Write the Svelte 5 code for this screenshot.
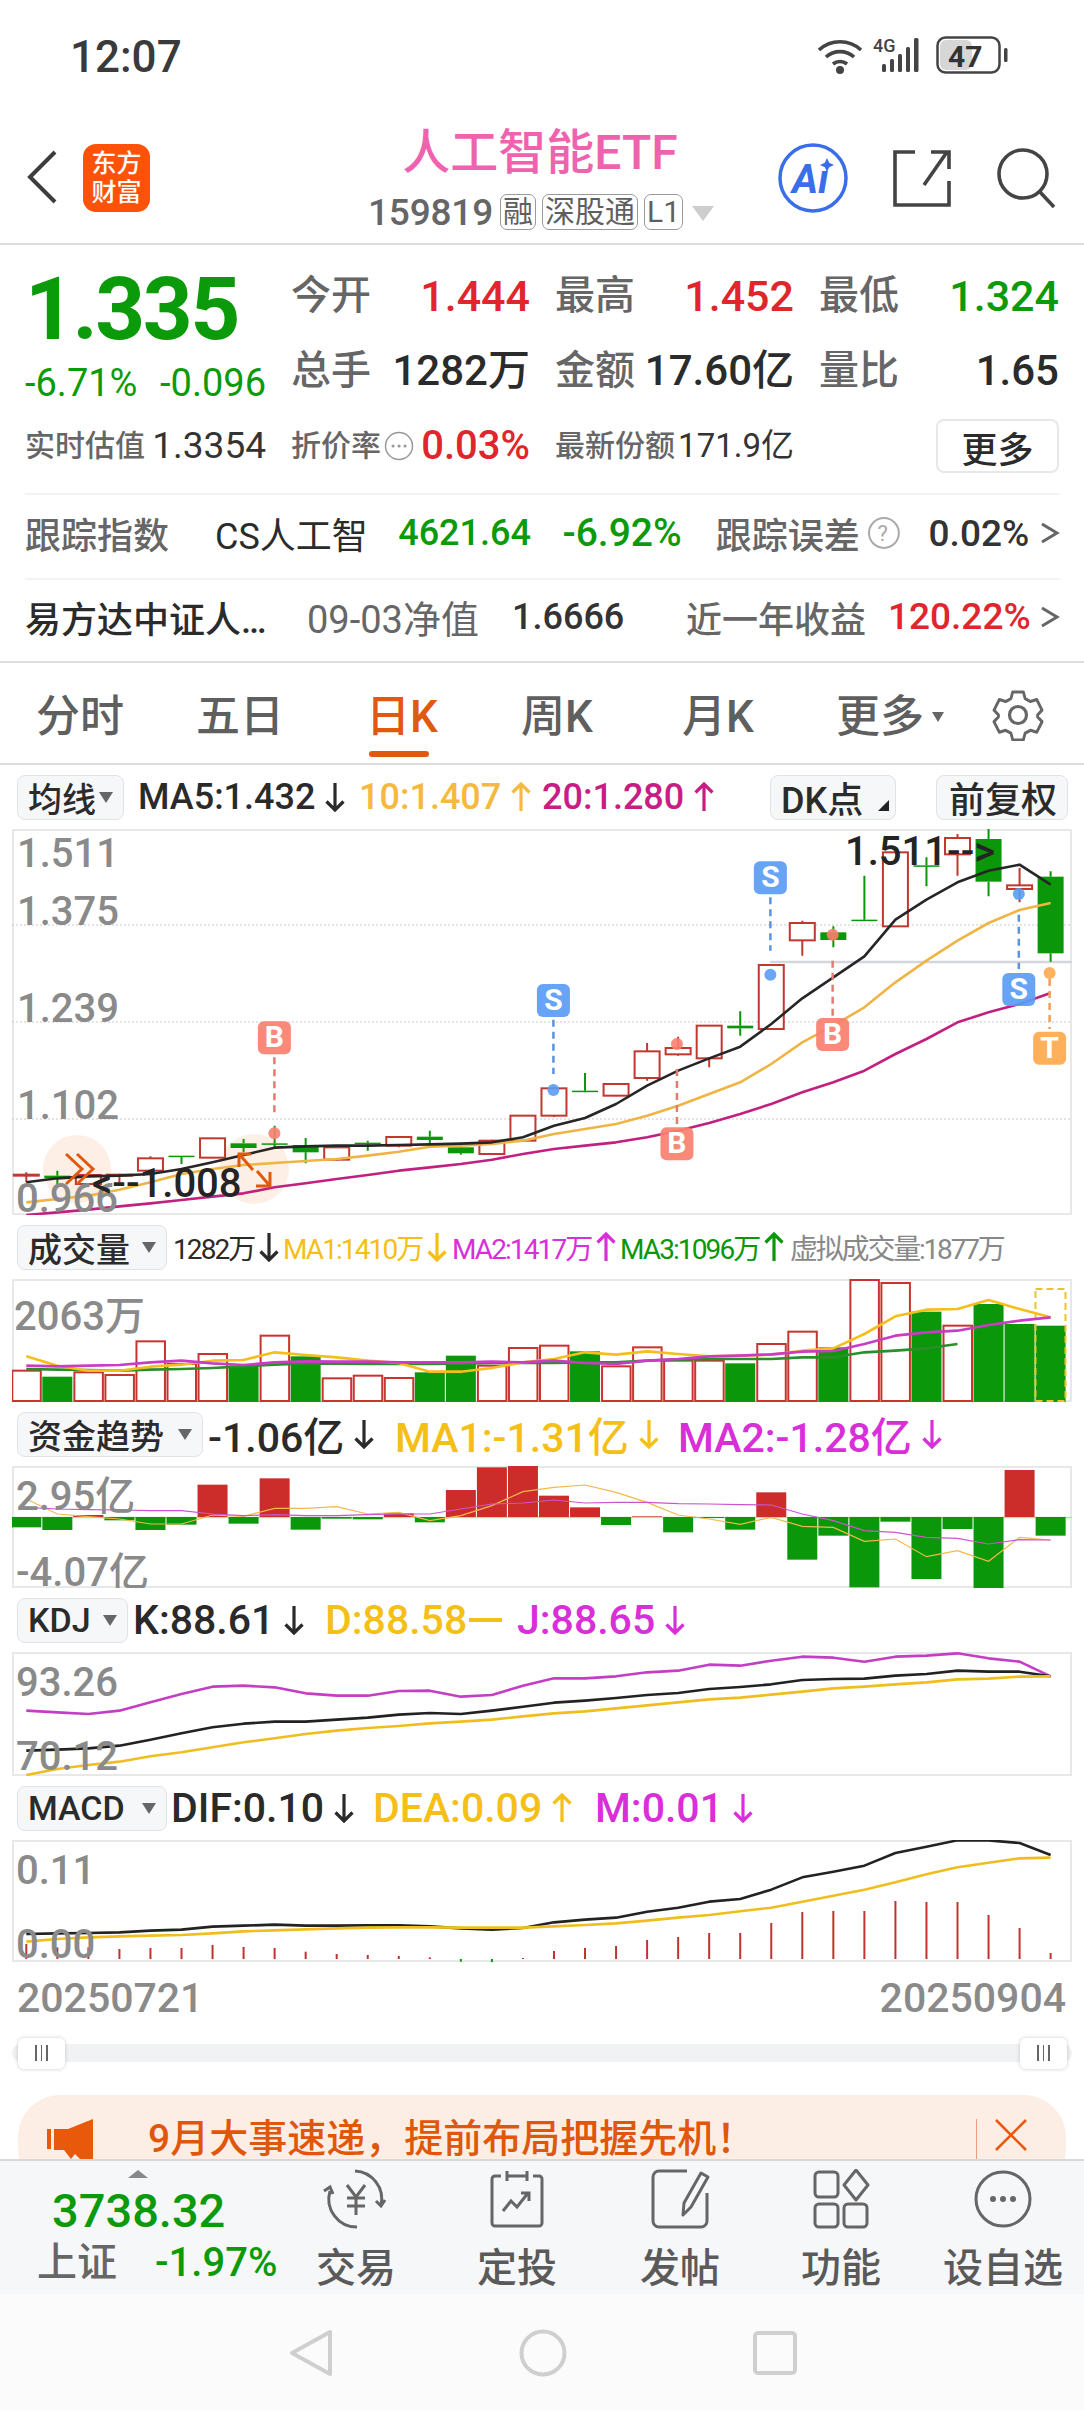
<script>
  const X = (i) => 26.3 + 31.04 * i;
  const pts = (arr, base, xs) => arr.map((v, i) => `${xs ? xs[i] : X(i)},${base + v / 3}`).join(' ');

  // [up, high, bodyTop, bodyBottom, low]
  const candles = [
    [1, 1210, 1217, 1220, 1240], [0, 1205, 1220, 1228, 1245], [1, 1214, 1218, 1245, 1247], [1, 1214, 1217, 1220, 1240],
    [1, 1162, 1168, 1205, 1208], [0, 1160, 1160, 1162, 1185], [1, 1106, 1108, 1166, 1168], [0, 1110, 1123, 1137, 1150],
    [0, 1070, 1123, 1125, 1140], [0, 1107, 1128, 1150, 1183], [1, 1133, 1135, 1172, 1175], [0, 1115, 1121, 1123, 1145],
    [1, 1102, 1104, 1130, 1135], [0, 1085, 1103, 1113, 1130], [0, 1125, 1135, 1153, 1157], [1, 1112, 1115, 1155, 1157],
    [1, 1038, 1040, 1115, 1118], [1, 955, 958, 1040, 1044], [0, 912, 965, 967, 970], [1, 943, 945, 980, 982],
    [1, 822, 847, 927, 935], [1, 803, 837, 856, 860], [1, 768, 770, 868, 895], [0, 727, 770, 778, 800],
    [1, 586, 588, 780, 782], [1, 455, 462, 514, 560], [0, 472, 490, 513, 535], [0, 320, 452, 454, 456],
    [1, 248, 250, 472, 474], [0, 265, 289, 291, 352], [1, 195, 207, 256, 320], [0, 180, 210, 338, 382],
    [1, 297, 349, 360, 400], [0, 307, 323, 553, 578],
  ];
  const ma5 = [1240, 1228, 1222, 1220, 1215, 1200, 1180, 1158, 1136, 1132, 1130, 1130, 1128, 1126, 1124, 1120, 1105, 1070, 1047, 1005, 950, 905, 868, 833, 765, 688, 625, 562, 452, 392, 340, 305, 287, 347];
  const ma10 = [1300, 1290, 1280, 1262, 1240, 1215, 1200, 1188, 1182, 1176, 1170, 1160, 1148, 1133, 1130, 1125, 1115, 1095, 1080, 1065, 1040, 1010, 975, 940, 885, 820, 770, 715, 640, 575, 515, 462, 423, 402];
  const ma20 = [1338, 1330, 1322, 1312, 1303, 1293, 1283, 1273, 1255, 1243, 1230, 1218, 1205, 1195, 1185, 1172, 1155, 1140, 1130, 1120, 1105, 1085, 1062, 1035, 1005, 970, 940, 905, 855, 810, 760, 730, 705, 672];
  const zx = (v) => 542 + v / 2.89;
  const zy = (v) => 770 + v / 3;
  const badges = [
    { t: 'B', x: 793 / 2.89, y1: 757, from: 865, to: 1035, dot: 1093, c: '#f8806f', l: '#e57a72' },
    { t: 'S', x: zx(33), y1: 645, from: 752, to: 915, dot: 963, c: '#5b9cf5', l: '#5b93dc' },
    { t: 'B', x: zx(390), y1: 1075, from: 900, to: 1065, dot: 825, c: '#f8806f', l: '#e57a72' },
    { t: 'S', x: zx(660), y1: 277, from: 385, to: 545, dot: 617, c: '#5b9cf5', l: '#5b93dc' },
    { t: 'B', x: zx(840), y1: 747, from: 575, to: 740, dot: 497, c: '#f8806f', l: '#e57a72' },
    { t: 'S', x: zx(1378), y1: 612, from: 437, to: 600, dot: 375, c: '#5b9cf5', l: '#5b93dc' },
    { t: 'T', x: zx(1467), y1: 788, from: 630, to: 780, dot: 612, c: '#ffa94d', l: '#f0a050' },
  ];

  const volumes = [455, 473, 460, 468, 367, 435, 405, 440, 350, 412, 478, 470, 477, 460, 410, 440, 387, 380, 397, 442, 385, 425, 425, 433, 375, 338, 385, 183, 192, 278, 320, 255, 315, 320];
  const volUp = [1, 0, 1, 1, 1, 1, 1, 0, 1, 0, 1, 1, 1, 0, 0, 1, 1, 1, 0, 1, 1, 1, 1, 0, 1, 1, 0, 1, 1, 0, 1, 0, 0, 0];
  const volMa1 = [412, 440, 455, 455, 443, 437, 425, 423, 400, 408, 415, 425, 432, 458, 458, 447, 430, 420, 400, 407, 397, 405, 412, 410, 407, 395, 388, 345, 292, 272, 270, 243, 270, 295];
  const volMa2 = [440, 442, 440, 438, 430, 425, 433, 438, 430, 427, 428, 428, 430, 430, 430, 428, 430, 425, 432, 435, 425, 420, 412, 410, 406, 398, 396, 375, 350, 340, 335, 318, 305, 295];
  const volMa3 = [450, 452, 453, 455, 452, 450, 447, 442, 437, 433, 434, 435, 435, 435, 434, 432, 432, 432, 430, 430, 425, 422, 420, 420, 420, 415, 415, 400, 395, 388, 375];

  const funds = [925, 933, 888, 904, 933, 917, 797, 914, 778, 932, 899, 901, 883, 910, 813, 745, 740, 830, 865, 918, 892, 940, 897, 932, 820, 1022, 950, 1105, 908, 1080, 930, 1108, 753, 950];
  const fundMa1 = [840, 885, 893, 900, 915, 915, 888, 892, 868, 868, 863, 885, 880, 905, 890, 860, 818, 805, 798, 820, 850, 888, 900, 916, 895, 922, 925, 967, 960, 1013, 995, 1027, 955, 963];
  const fundMa2 = [865, 870, 872, 873, 875, 875, 885, 890, 887, 890, 890, 887, 885, 885, 870, 855, 852, 843, 852, 850, 850, 854, 855, 857, 858, 885, 905, 935, 940, 955, 958, 975, 962, 963];

  const kdjJ = [275, 280, 285, 275, 250, 225, 203, 200, 205, 223, 230, 230, 216, 215, 233, 228, 200, 178, 178, 172, 160, 155, 137, 140, 125, 113, 116, 128, 113, 110, 103, 118, 128, 172];
  const kdjK = [395, 392, 388, 380, 362, 343, 325, 314, 308, 308, 302, 296, 287, 282, 285, 275, 263, 251, 245, 237, 228, 222, 210, 204, 196, 183, 180, 179, 170, 165, 155, 158, 158, 172];
  const kdjD = [468, 450, 438, 428, 412, 400, 385, 370, 358, 345, 335, 327, 321, 313, 308, 302, 292, 283, 277, 268, 259, 250, 241, 236, 227, 218, 208, 203, 196, 190, 181, 179, 173, 172];

  const dif = [945, 943, 942, 940, 935, 932, 923, 920, 917, 920, 920, 919, 919, 922, 928, 932, 927, 910, 902, 896, 878, 866, 848, 840, 812, 775, 758, 740, 702, 683, 664, 664, 672, 708];
  const dea = [968, 960, 955, 952, 950, 948, 943, 937, 934, 931, 928, 926, 925, 925, 926, 926, 926, 922, 918, 913, 905, 896, 888, 877, 866, 848, 830, 812, 790, 766, 745, 731, 718, 716];
  const macd = [975, 985, 985, 990, 987, 987, 978, 984, 987, 998, 1005, 1008, 1011, 1015, 1028, 1032, 1017, 996, 987, 981, 963, 954, 942, 942, 912, 879, 876, 876, 846, 849, 849, 888, 927, 1002];

  const tools = ['交易', '定投', '发帖', '功能', '设自选'];
  const tabs = ['分时', '五日', '日K', '周K', '月K'];
</script>

{#snippet arrow(dir)}
  <svg class="arrow" viewBox="0 0 22 30">
    {#if dir === 'down'}
      <path d="M11 1v27M2.5 19.5 11 28l8.5-8.5" />
    {:else}
      <path d="M11 29V2M2.5 10.5 11 2l8.5 8.5" />
    {/if}
  </svg>
{/snippet}

{#snippet caret()}
  <i class="caret"></i>
{/snippet}

<div class="page">
  <div class="status">
    <span class="time">12:07</span>
    <svg class="status-icons" viewBox="0 0 200 40" width="200" height="40">
      <g fill="none" stroke="#444" stroke-width="3.6">
        <path d="M1 14a31 31 0 0 1 42 0" />
        <path d="M8 21a21 21 0 0 1 28 0" />
        <path d="M15 28a11 11 0 0 1 14 0" />
      </g>
      <circle cx="22" cy="34" r="4" fill="#444" />
      <text x="55" y="16" class="four-g">4G</text>
      <g fill="#444">
        <rect x="64" y="28" width="4" height="8" rx="1.5" /><rect x="72" y="23" width="4" height="13" rx="1.5" />
        <rect x="80" y="18" width="4" height="18" rx="1.5" /><rect x="88" y="11" width="4" height="25" rx="1.5" />
        <rect x="96" y="2" width="4.5" height="34" rx="1.5" />
      </g>
      <rect x="119.5" y="1.5" width="62" height="35" rx="8" fill="#fff" stroke="#444" stroke-width="2.5" />
      <rect x="122" y="4" width="32" height="30" rx="6" fill="#d6d6d6" />
      <text x="130" y="31" class="batt">47</text>
      <rect x="186" y="12" width="3.5" height="14" rx="1.5" fill="#444" />
    </svg>
  </div>

  <header class="nav">
    <svg class="back" viewBox="0 0 32 56"><path d="M29 3 4 28l25 25" /></svg>
    <div class="logo"><span>东方</span><span>财富</span></div>
    <div class="title">
      <h1>人工智能ETF</h1>
      <div class="code">
        <span class="num">159819</span><b>融</b><b>深股通</b><b>L1</b><i class="down-tri"></i>
      </div>
    </div>
    <div class="nav-icons">
      <svg width="70" height="72" viewBox="0 0 70 72">
        <circle cx="35" cy="36" r="33" fill="none" stroke="#3a6ee8" stroke-width="3.5" />
        <text x="14" y="51" class="ai">Aı</text>
        <path d="M49 16l2.2 4.8 4.8 2.2-4.8 2.2-2.2 4.8-2.2-4.8-4.8-2.2 4.8-2.2z" fill="#3a6ee8" />
      </svg>
      <svg width="58" height="58" viewBox="0 0 58 58" fill="none" stroke="#444" stroke-width="3.6">
        <path d="M22 3H2v53h54V32M54 3 31 36M38 3h18v17" />
      </svg>
      <svg width="60" height="60" viewBox="0 0 60 60" fill="none" stroke="#444" stroke-width="3.6">
        <ellipse cx="27" cy="26" rx="24" ry="24" /><path d="M44 44l14 15" />
      </svg>
    </div>
  </header>

  <section class="quote">
    <div class="big">
      <div class="price">1.335</div>
      <div class="change"><span>-6.71%</span><span>-0.096</span></div>
    </div>
    <div class="kv"><label>今开</label><span class="red">1.444</span></div>
    <div class="kv"><label>最高</label><span class="red">1.452</span></div>
    <div class="kv"><label>最低</label><span class="green">1.324</span></div>
    <div class="kv"><label>总手</label><span class="ink">1282万</span></div>
    <div class="kv"><label>金额</label><span class="ink">17.60亿</span></div>
    <div class="kv"><label>量比</label><span class="ink">1.65</span></div>
    <div class="kv small"><label>实时估值</label><span class="dark">1.3354</span></div>
    <div class="kv small">
      <label>折价率</label>
      <svg class="dots" viewBox="0 0 30 30"><circle cx="15" cy="15" r="13.5" /><path d="M9 15h.1M15 15h.1M21 15h.1" /></svg>
      <span class="red rate">0.03%</span>
    </div>
    <div class="kv small"><label>最新份额</label><span class="dark share">171.9亿</span></div>
    <div class="more-cell"><button>更多</button></div>
  </section>

  <section class="row first">
    <label>跟踪指数</label>
    <span class="ink name">CS人工智</span>
    <span class="green v1">4621.64</span>
    <span class="green v2">-6.92%</span>
    <label class="v3">跟踪误差</label>
    <svg class="help" viewBox="0 0 34 34"><circle cx="17" cy="17" r="15" /><text x="10.5" y="25">?</text></svg>
    <span class="dark v4">0.02%</span>
    <svg class="gt" viewBox="0 0 20 24"><path d="M2 3l15 9L2 21" /></svg>
  </section>
  <section class="row second">
    <span class="ink fund">易方达中证人…</span>
    <label class="n1">09-03净值</label>
    <span class="dark n2">1.6666</span>
    <label class="n3">近一年收益</label>
    <span class="red n4">120.22%</span>
    <svg class="gt" viewBox="0 0 20 24"><path d="M2 3l15 9L2 21" /></svg>
  </section>

  <nav class="tabs">
    {#each tabs as t, i}
      <span class="tab" class:on={i === 2}>{t}</span>
    {/each}
    <span class="tab tab-more">更多<i class="mini-tri"></i></span>
    <svg class="gear" viewBox="0 0 54 52" fill="none" stroke="#666" stroke-width="3.2">
      <path d="M21 2h12l2 7 6 3 7-2 6 11-5 5 0 2 5 5-6 11-7-2-6 3-2 7H21l-2-7-6-3-7 2L0 33l5-5v-2l-5-5 6-11 7 2 6-3z" transform="translate(3 1) scale(.89 .96)" stroke-linejoin="round" />
      <circle cx="27" cy="26" r="8.5" />
    </svg>
  </nav>

  <div class="ind-head">
    <button class="sel" style="width:107px">均线{@render caret()}</button>
    <div class="vals v-ma">
      <span class="k">MA5:1.432{@render arrow('down')}</span>
      <span class="y2">10:1.407{@render arrow('up')}</span>
      <span class="p2">20:1.280{@render arrow('up')}</span>
    </div>
    <button class="sel dk">DK点<i class="corner"></i></button>
    <button class="sel fq">前复权</button>
  </div>
  <div class="frame">
    <svg viewBox="12 830 1060 386" width="1060" height="386">
      <g stroke="#c9c9c9" stroke-width="1" stroke-dasharray="2 2">
        <path d="M12 926H1072M12 1023H1072M12 1120H1072" />
      </g>
      <path d="M770 963H1072" stroke="#d4d6da" stroke-width="2.5" />

      <circle cx="77" cy="1170" r="34" fill="#fdeee6" />
      <circle cx="254" cy="1170" r="35" fill="#fdeee6" />

      {#each candles as [up, hi, top, bot, lo], i}
        {@const c = up ? '#c0382f' : '#0a970a'}
        <path d={`M${X(i)} ${zy(hi)}V${zy(top)}M${X(i)} ${zy(bot)}V${zy(lo)}`} stroke={c} stroke-width="2" />
        {#if up}
          <rect x={X(i) - 12.5} y={zy(top)} width="25" height={Math.max(zy(bot) - zy(top), 1)} fill="#fff" stroke={c} stroke-width="2" />
        {:else}
          <rect x={X(i) - 13} y={zy(top)} width="26" height={Math.max(zy(bot) - zy(top), 1.5)} fill={c} />
        {/if}
      {/each}

      <polyline class="line" points={pts(ma20, 770)} stroke="#c2207f" />
      <polyline class="line" points={pts(ma10, 770)} stroke="#f0b445" />
      <polyline class="line" points={pts(ma5, 770)} stroke="#262626" />

      <g class="axis">
        <text x="17" y="868">1.511</text>
        <text x="17" y="926">1.375</text>
        <text x="17" y="1023">1.239</text>
        <text x="17" y="1120">1.102</text>
        <text x="16" y="1213">0.966</text>
      </g>
      <text class="mark" x="845" y="866">1.511--&gt;</text>
      <text class="mark" x="92" y="1198">&lt;--1.008</text>

      <g fill="none" stroke="#e05a0e" stroke-width="3">
        <path d="M66 1155l16 15-16 15M77 1155l16 15-16 15" />
        <path d="M239 1168v-13h12M239 1155l14 16" />
        <path d="M256 1187h14v-14M270 1187l-13-15" />
      </g>

      {#each badges as b}
        <path d={`M${b.x} ${zy(b.from)}V${zy(b.to)}`} stroke={b.l} stroke-width="2.5" stroke-dasharray="7 5" />
        <circle cx={b.x} cy={zy(b.dot)} r="6" fill={b.c} opacity=".9" />
        <rect x={b.x - 16.5} y={zy(b.y1)} width="33" height="33" rx="6" fill={b.c} opacity=".92" />
        <text class="badge" x={b.x} y={zy(b.y1) + 26} text-anchor="middle">{b.t}</text>
      {/each}
    </svg>
  </div>

  <div class="ind-head">
    <button class="sel" style="width:150px">成交量{@render caret()}</button>
    <div class="vals v-vol">
      <span class="k">1282万{@render arrow('down')}</span>
      <span class="y">MA1:1410万{@render arrow('down')}</span>
      <span class="m">MA2:1417万{@render arrow('up')}</span>
      <span class="g">MA3:1096万{@render arrow('up')}</span>
      <span class="gray">虚拟成交量:1877万</span>
    </div>
  </div>
  <div class="frame">
    <svg viewBox="12 1280 1060 123" width="1060" height="123">
      <text class="axis" x="14" y="1331">2063万</text>
      {#each volumes as v, i}
        {@const y = 1220 + v / 3}
        {#if volUp[i]}
          <rect x={X(i) - 14} y={y} width="28.5" height={1402 - y} fill="#fff" stroke="#c8342f" stroke-width="2" />
        {:else}
          <rect x={X(i) - 15} y={y} width="30" height={1403 - y} fill="#0a970a" />
        {/if}
      {/each}
      <rect x="1035.5" y="1290" width="30" height="112" fill="none" stroke="#e9c52b" stroke-width="2" stroke-dasharray="7 4" />
      <polyline class="line" points={pts(volMa3, 1220)} stroke="#2a8f2a" />
      <polyline class="line" points={pts(volMa1, 1220)} stroke="#f5bf1b" />
      <polyline class="line" points={pts(volMa2, 1220)} stroke="#c93cc3" />
    </svg>
  </div>

  <div class="ind-head">
    <button class="sel" style="width:186px">资金趋势{@render caret()}</button>
    <div class="vals v-fund">
      <span class="k">-1.06亿{@render arrow('down')}</span>
      <span class="y">MA1:-1.31亿{@render arrow('down')}</span>
      <span class="m">MA2:-1.28亿{@render arrow('down')}</span>
    </div>
  </div>
  <div class="frame">
    <svg viewBox="12 1467 1060 122" width="1060" height="122">
      <path d="M12 1518.5H1072" stroke="#a6e6a6" stroke-width="1.5" />
      {#each funds as v, i}
        {@const y = 1220 + v / 3}
        {#if y < 1518}
          <rect x={X(i) - 15} y={y} width="30" height={1518 - y} fill="#cc2d2a" />
        {:else}
          <rect x={X(i) - 15} y="1518" width="30" height={y - 1518} fill="#0a970a" />
        {/if}
      {/each}
      <polyline class="thin" points={pts(fundMa1, 1220)} stroke="#f2b84a" />
      <polyline class="thin" points={pts(fundMa2, 1220)} stroke="#cc55cc" />
      <g class="axis">
        <text x="16" y="1511">2.95亿</text>
        <text x="16" y="1587">-4.07亿</text>
      </g>
    </svg>
  </div>

  <div class="ind-head">
    <button class="sel" style="width:111px">KDJ{@render caret()}</button>
    <div class="vals v-kdj">
      <span class="k">K:88.61{@render arrow('down')}</span>
      <span class="y">D:88.58<em class="flat"></em></span>
      <span class="m">J:88.65{@render arrow('down')}</span>
    </div>
  </div>
  <div class="frame">
    <svg viewBox="12 1653 1060 124" width="1060" height="124">
      <polyline class="line" points={pts(kdjJ, 1620)} stroke="#c33ec4" />
      <polyline class="line" points={pts(kdjK, 1620)} stroke="#222" />
      <polyline class="line" points={pts(kdjD, 1620)} stroke="#efbe1e" />
      <g class="axis">
        <text x="16" y="1697">93.26</text>
        <text x="16" y="1771">70.12</text>
      </g>
    </svg>
  </div>

  <div class="ind-head">
    <button class="sel" style="width:150px">MACD{@render caret()}</button>
    <div class="vals v-macd">
      <span class="k">DIF:0.10{@render arrow('down')}</span>
      <span class="y">DEA:0.09{@render arrow('up')}</span>
      <span class="m">M:0.01{@render arrow('down')}</span>
    </div>
  </div>
  <div class="frame">
    <svg viewBox="12 1841 1060 122" width="1060" height="122">
      {#each macd as v, i}
        {@const y = 1620 + v / 3}
        <path d={`M${X(i)} 1960V${y}`} stroke={v > 1020 ? '#0a970a' : '#c0332e'} stroke-width="2" />
      {/each}
      <polyline class="line" points={pts(dif, 1620)} stroke="#222" />
      <polyline class="line" points={pts(dea, 1620)} stroke="#efbe1e" />
      <g class="axis">
        <text x="16" y="1885">0.11</text>
        <text x="16" y="1959">0.00</text>
      </g>
    </svg>
  </div>

  <div class="dates"><span>20250721</span><span>20250904</span></div>

  <div class="slider">
    <span class="handle"><i></i><i></i><i></i></span>
    <span class="handle"><i></i><i></i><i></i></span>
  </div>

  <div class="banner">
    <svg width="46" height="40" viewBox="0 0 46 40" fill="#e8590c">
      <rect x="0" y="10" width="4" height="20" />
      <path d="M7 10h14L46 0v40H33l-5-5-4 5-7-9H7z" />
    </svg>
    <span class="banner-text">9月大事速递，提前布局把握先机！</span>
    <i class="banner-sep"></i>
    <svg width="34" height="32" viewBox="0 0 34 32" stroke="#e8590c" stroke-width="2.6" fill="none"><path d="M2 1l30 30M32 1 2 31" /></svg>
  </div>

  <footer class="tools">
    <div class="ticker">
      <i class="up-tri"></i>
      <div class="index">3738.32</div>
      <div class="index-row"><label>上证</label><span class="green">-1.97%</span></div>
    </div>
    {#each tools as t, i}
      <div class="tool">
        <svg width="70" height="60" viewBox="0 0 70 60" fill="none" stroke="#666" stroke-width="3">
          {#if i === 0}
            <path d="M34 2a28 28 0 0 1 26 34M36 58A28 28 0 0 1 9 22" />
            <path d="M3 22l6-4 3 7M55 32l5 5 4-6" />
            <path d="M26 16l9 12 9-12M35 28v18M26 29h18M26 37h18" />
          {:else if i === 1}
            <path d="M19 7h-6a3 3 0 0 0-3 3v44a3 3 0 0 0 3 3h44a3 3 0 0 0 3-3V10a3 3 0 0 0-3-3h-6M25 7h20M25 2v10M45 2v10" />
            <path d="M21 42l8-10 6 6 11-14M39 24h8v8" />
          {:else if i === 2}
            <path d="M42 2H14a6 6 0 0 0-6 6v44a6 6 0 0 0 6 6h42a6 6 0 0 0 6-6V24" />
            <path d="M56 4l7 4-17 30-8 8 1-12z" stroke-linejoin="round" />
          {:else if i === 3}
            <rect x="9" y="3" width="23" height="25" rx="4" /><rect x="9" y="35" width="23" height="23" rx="4" /><rect x="38" y="35" width="23" height="23" rx="4" />
            <path d="M50 1l12 15-12 15-12-15z" stroke-linejoin="round" />
          {:else}
            <circle cx="35" cy="30" r="27" />
            <g fill="#666" stroke="none"><circle cx="25" cy="30" r="3" /><circle cx="35" cy="30" r="3" /><circle cx="45" cy="30" r="3" /></g>
          {/if}
        </svg>
        <span>{t}</span>
      </div>
    {/each}
  </footer>

  <div class="sysnav">
    <svg width="44" height="48" viewBox="0 0 44 48" fill="none" stroke="#cfcfcf" stroke-width="4" stroke-linejoin="round"><path d="M41 3v42L3 24z" /></svg>
    <svg width="48" height="48" viewBox="0 0 48 48" fill="none" stroke="#cfcfcf" stroke-width="4"><circle cx="24" cy="24" r="21.5" /></svg>
    <svg width="44" height="44" viewBox="0 0 44 44" fill="none" stroke="#cfcfcf" stroke-width="4"><rect x="2" y="2" width="40" height="40" rx="3" /></svg>
  </div>
</div>

<style>
  :global(body) {
    margin: 0;
    background: #fff;
  }

  .page {
    width: 1084px;
    height: 2412px;
    overflow: hidden;
    position: relative;
    font-family: Roboto, "Noto Sans CJK SC", sans-serif;
    color: #333;
  }

  .red { color: #e0262c; }
  .green { color: #0a9a0a; }
  .ink { color: #2b2b2b; font-weight: 500; }
  .dark { color: #333; }
  label { color: #666; font-weight: 500; }

  .status {
    height: 120px;
    display: flex;
    justify-content: space-between;
    align-items: flex-start;
    padding: 33px 66px 0 70px;
    box-sizing: border-box;
  }

  .time {
    font-size: 44px;
    font-weight: 500;
    color: #3a3a3a;
    line-height: 48px;
  }

  .status-icons {
    margin-top: 3px;
    margin-right: 0;
  }

  .four-g { font: 500 18px Roboto, sans-serif; fill: #444; }
  .batt { font: 700 30px Roboto, sans-serif; fill: #333; }

  .nav {
    height: 125px;
    box-sizing: border-box;
    border-bottom: 2px solid #dddddd;
    display: flex;
    align-items: flex-start;
    position: relative;
    padding: 24px 0 0 26px;
  }

  .back {
    width: 32px;
    height: 56px;
    margin-top: 5px;
    fill: none;
    stroke: #3d3d3d;
    stroke-width: 4;
  }

  .logo {
    width: 67px;
    height: 68px;
    margin-left: 25px;
    border-radius: 13px;
    background: #ff5209;
    color: #fff;
    font-size: 25px;
    line-height: 29px;
    font-weight: 500;
    display: flex;
    flex-direction: column;
    align-items: center;
    justify-content: center;
  }

  .title {
    position: absolute;
    left: 280px;
    width: 520px;
    top: 0;
    display: flex;
    flex-direction: column;
    align-items: center;
  }

  h1 {
    margin: 0;
    font-size: 48px;
    line-height: 66px;
    font-weight: 500;
    color: #ef63ae;
    margin-top: 0;
  }

  .code {
    display: flex;
    align-items: center;
    gap: 6px;
    height: 38px;
    margin-top: 7px;
    color: #666;
    margin-left: 2px;
  }

  .num {
    font-size: 37px;
    font-weight: 500;
    margin-right: 1px;
    letter-spacing: -.2px;
  }

  .code b {
    font-weight: 400;
    font-size: 30px;
    line-height: 34px;
    padding: 0 2px;
    border: 1.5px solid #9a9a9a;
    border-radius: 7px;
    color: #5f5f5f;
  }

  .down-tri {
    width: 0;
    height: 0;
    border: 11px solid transparent;
    border-top: 15px solid #cdcdcd;
    border-bottom: 0;
    margin-left: 3px;
    margin-top: 2px;
  }

  .nav-icons {
    position: absolute;
    left: 778px;
    top: 22px;
    display: flex;
    align-items: center;
    gap: 45px;
  }

  .ai {
    font: italic 700 40px Roboto, sans-serif;
    fill: #3a6ee8;
  }

  .quote {
    height: 250px;
    box-sizing: border-box;
    margin: 0 24px 0 25px;
    padding-top: 13px;
    border-bottom: 2px solid #f3f3f3;
    display: grid;
    grid-template-columns: 241px 239px 239px 240px;
    grid-template-rows: 75px 75px 75px;
    column-gap: 25px;
    align-items: center;
  }

  .big {
    grid-row: 1 / span 2;
    align-self: start;
  }

  .price {
    font-size: 87px;
    line-height: 96px;
    font-weight: 700;
    color: #0a9a0a;
    margin-top: 3px;
    letter-spacing: -2.4px;
  }

  .change {
    display: flex;
    justify-content: space-between;
    font-size: 38px;
    color: #0a9a0a;
    line-height: 40px;
    margin-top: 6px;
    white-space: nowrap;
  }

  .kv {
    display: flex;
    align-items: center;
    justify-content: space-between;
    font-size: 43px;
    line-height: 46px;
    font-weight: 500;
    white-space: nowrap;
  }

  .kv label {
    font-size: 40px;
  }

  .kv .ink {
    font-size: 42px;
  }

  .kv.small {
    font-size: 37px;
    font-weight: 400;
    justify-content: flex-start;
    gap: 0;
  }

  .kv.small label {
    font-size: 30px;
    flex: 0 0 auto;
  }

  .kv.small > :last-child {
    margin-left: auto;
  }

  .kv .rate {
    font-size: 40px;
    font-weight: 500;
  }

  .kv .share {
    font-size: 33px;
  }

  .dots {
    width: 30px;
    height: 30px;
    margin-left: 3px;
    fill: none;
    stroke: #999;
    stroke-width: 1.5;
  }

  .dots path {
    stroke-width: 3;
    stroke-linecap: round;
  }

  .more-cell {
    justify-self: end;
  }

  button {
    font-family: inherit;
    color: #2b2b2b;
  }

  .more-cell button {
    width: 123px;
    height: 54px;
    background: #fff;
    border: 2px solid #e8e8e8;
    border-radius: 8px;
    font-size: 36px;
    padding: 0;
    font-weight: 500;
  }

  .row {
    box-sizing: border-box;
    margin: 0 24px 0 25px;
    display: flex;
    align-items: center;
    font-size: 36px;
    white-space: nowrap;
  }

  .row.first {
    height: 85px;
    padding-bottom: 7px;
    border-bottom: 2px solid #f3f3f3;
  }

  .row.second {
    height: 83px;
    margin: 0;
    padding: 0 24px 8px 25px;
    border-bottom: 2px solid #dddddd;
  }

  .name { margin-left: 46px; width: 184px; font-weight: 400; }
  .v1 { width: 165px; font-weight: 500; }
  .v2 { width: 154px; font-weight: 500; font-size: 39px; }
  .help {
    width: 34px;
    height: 34px;
    margin-left: 7px;
    fill: none;
    stroke: #aaa;
    stroke-width: 2;
  }

  .help text {
    font-size: 22px;
    fill: #aaa;
    stroke: none;
  }

  .v4 { margin-left: 28px; width: 112px; font-weight: 500; font-size: 37px; }
  .gt {
    width: 20px;
    height: 24px;
    fill: none;
    stroke: #666;
    stroke-width: 3;
    margin-left: auto;
  }

  .fund { width: 282px; }
  .n1 { width: 205px; font-size: 38px; font-weight: 400; }
  .n2 { width: 174px; font-weight: 500; }
  .n3 { width: 202px; }
  .n4 { font-weight: 500; font-size: 37px; }

  .tabs {
    height: 102px;
    box-sizing: border-box;
    border-bottom: 2px solid #dddddd;
    position: relative;
    display: flex;
    align-items: center;
    padding: 8px 0 0 36px;
    font-size: 44px;
    color: #5f5f5f;
  }

  .tab {
    font-weight: 500;
    line-height: 50px;
    position: relative;
  }

  .tab:nth-child(1) { width: 160px; }
  .tab:nth-child(2) { width: 170px; }
  .tab:nth-child(3) { width: 155px; }
  .tab:nth-child(4) { width: 161px; }
  .tab:nth-child(5) { width: 154px; }

  .tab.on {
    color: #e05a0e;
  }

  .tab.on::after {
    content: '';
    position: absolute;
    left: 3px;
    width: 60px;
    top: 59px;
    height: 6px;
    background: #e05a0e;
    border-radius: 3px;
  }

  .tab-more {
    display: flex;
    align-items: center;
  }

  .mini-tri {
    width: 0;
    height: 0;
    border: 6px solid transparent;
    border-top: 10px solid #666;
    border-bottom: 0;
    margin-left: 8px;
  }

  .gear {
    width: 54px;
    height: 52px;
    margin-left: 47px;
    margin-top: -4px;
  }

  .ind-head {
    height: 64px;
    display: flex;
    align-items: center;
    padding-left: 17px;
    white-space: nowrap;
  }

  .sel {
    height: 45px;
    box-sizing: border-box;
    background: #f6f7f9;
    border: 1.5px solid #e0e2e6;
    border-radius: 8px;
    font-size: 34px;
    font-weight: 500;
    padding: 0 0 0 10px;
    display: flex;
    align-items: center;
  }

  .caret {
    width: 0;
    height: 0;
    border: 7px solid transparent;
    border-top: 11px solid #666;
    border-bottom: 0;
    margin-left: auto;
    margin-right: 10px;
  }

  .dk {
    width: 126px;
    position: absolute;
    left: 770px;
    font-size: 36px;
  }

  .fq {
    width: 132px;
    position: absolute;
    left: 936px;
    font-size: 36px;
    padding: 0 0 0 12px;
  }

  .corner {
    position: absolute;
    right: 6px;
    bottom: 8px;
    width: 0;
    height: 0;
    border-left: 11px solid transparent;
    border-bottom: 11px solid #222;
  }

  .vals {
    display: flex;
    align-items: center;
    font-weight: 500;
    font-size: 41px;
  }

  .vals span {
    display: flex;
    align-items: center;
  }

  .arrow {
    width: 22px;
    height: 30px;
    flex: none;
    fill: none;
    stroke: currentColor;
    stroke-width: 3.2;
    margin-left: 9px;
  }

  .k { color: #2a2a2a; }
  .y { color: #f4bf17; }
  .m { color: #d82fd8; }
  .g { color: #0a970a; }
  .y2 { color: #f6b93f; }
  .p2 { color: #c71d85; }
  .gray { color: #888; }

  .v-ma { margin-left: 14px; font-size: 36px; }
  .v-ma .k { width: 221px; }
  .v-ma .y2 { width: 183px; }

  .v-vol {
    margin-left: 6px;
    font-size: 28px;
    letter-spacing: -1.9px;
    font-weight: 400;
  }

  .v-vol .arrow {
    margin-left: 4px;
  }

  .v-vol .k { width: 110px; }
  .v-vol .y { width: 169px; }
  .v-vol .m { width: 168px; }
  .v-vol .g { width: 170px; }
  .v-vol .gray { letter-spacing: -2.2px; }

  .v-fund { margin-left: 5px; }
  .v-fund .k { width: 187px; }
  .v-fund .y { width: 283px; }

  .v-kdj { margin-left: 5px; }
  .v-kdj .k { width: 192px; }
  .v-kdj .y { width: 192px; }

  .v-macd { margin-left: 4px; }
  .v-macd .k { width: 202px; }
  .v-macd .y { width: 222px; }

  .flat {
    width: 33px;
    height: 4px;
    background: currentColor;
    display: block;
    margin-left: 2px;
  }

  .frame {
    margin-left: 12px;
    width: 1060px;
    box-shadow: inset 0 0 0 2px #e8e8ea;
    display: flex;
  }

  .frame svg {
    display: block;
    overflow: hidden;
  }

  .line {
    fill: none;
    stroke-width: 2.6;
    stroke-linejoin: round;
  }

  .thin {
    fill: none;
    stroke-width: 1.2;
  }

  .axis {
    font-size: 40px;
    font-weight: 500;
    fill: #8a8a8a;
  }

  .mark {
    font-size: 40px;
    font-weight: 500;
    fill: #242424;
  }

  .badge {
    font-size: 30px;
    font-weight: 700;
    fill: #fff;
  }

  .dates {
    display: flex;
    justify-content: space-between;
    padding: 0 18px 0 17px;
    height: 67px;
    box-sizing: border-box;
    padding-top: 14px;
    font-size: 41px;
    line-height: 44px;
    font-weight: 500;
    color: #8a8a8a;
  }

  .slider {
    margin: 15px 12px 0;
    height: 18px;
    background: #f1f2f4;
    border-radius: 9px;
    display: flex;
    justify-content: space-between;
    align-items: center;
    padding: 0 5px 0 6px;
  }

  .handle {
    width: 47px;
    height: 31px;
    background: #fff;
    border-radius: 6px;
    box-shadow: 0 0 4px rgba(0, 0, 0, .2);
    display: flex;
    justify-content: center;
    gap: 4px;
    align-items: center;
  }

  .handle i {
    width: 1.5px;
    height: 16px;
    background: #666;
  }

  .banner {
    margin: 33px 18px -32px;
    height: 96px;
    padding: 24px 38px 0 29px;
    box-sizing: border-box;
    background: #fdeee5;
    border-radius: 42px;
    display: flex;
    align-items: flex-start;
    color: #e0560a;
  }

  .banner-text {
    font-size: 39px;
    line-height: 40px;
    font-weight: 500;
    margin-left: 55px;
    width: 780px;
    white-space: nowrap;
  }

  .banner-sep {
    width: 1px;
    height: 40px;
    background: #e8a07c;
    margin-left: auto;
    margin-right: 17px;
  }

  .tools {
    position: relative;
    height: 135px;
    box-sizing: border-box;
    border-top: 2px solid #d9d9d9;
    background: #f6f7f9;
    display: flex;
    padding-left: 37px;
  }

  .ticker {
    width: 247px;
    position: relative;
    padding-top: 25px;
    box-sizing: border-box;
  }

  .up-tri {
    position: absolute;
    left: 91px;
    top: 9px;
    width: 0;
    height: 0;
    border: 10px solid transparent;
    border-bottom: 8px solid #888;
    border-top: 0;
  }

  .index {
    font-size: 47px;
    line-height: 50px;
    font-weight: 500;
    color: #0a9a0a;
    margin-left: 15px;
  }

  .index-row {
    display: flex;
    align-items: center;
    font-size: 40px;
    gap: 38px;
    margin-top: 3px;
    white-space: nowrap;
  }

  .index-row label {
    font-size: 40px;
    line-height: 46px;
  }

  .index-row .green {
    font-weight: 500;
  }

  .tool {
    position: absolute;
    top: 8px;
    width: 160px;
    display: flex;
    flex-direction: column;
    align-items: center;
    font-size: 40px;
    font-weight: 500;
    color: #5a5a5a;
    line-height: 46px;
    gap: 17px;
  }

  .tool:nth-child(2) { left: 276px; }
  .tool:nth-child(3) { left: 437px; }
  .tool:nth-child(4) { left: 600px; }
  .tool:nth-child(5) { left: 761px; }
  .tool:nth-child(6) { left: 923px; }

  .sysnav {
    height: 117px;
    background: #fbfbfb;
    display: flex;
    align-items: center;
    padding-left: 289px;
    gap: 186px;
    position: relative;
  }
</style>
